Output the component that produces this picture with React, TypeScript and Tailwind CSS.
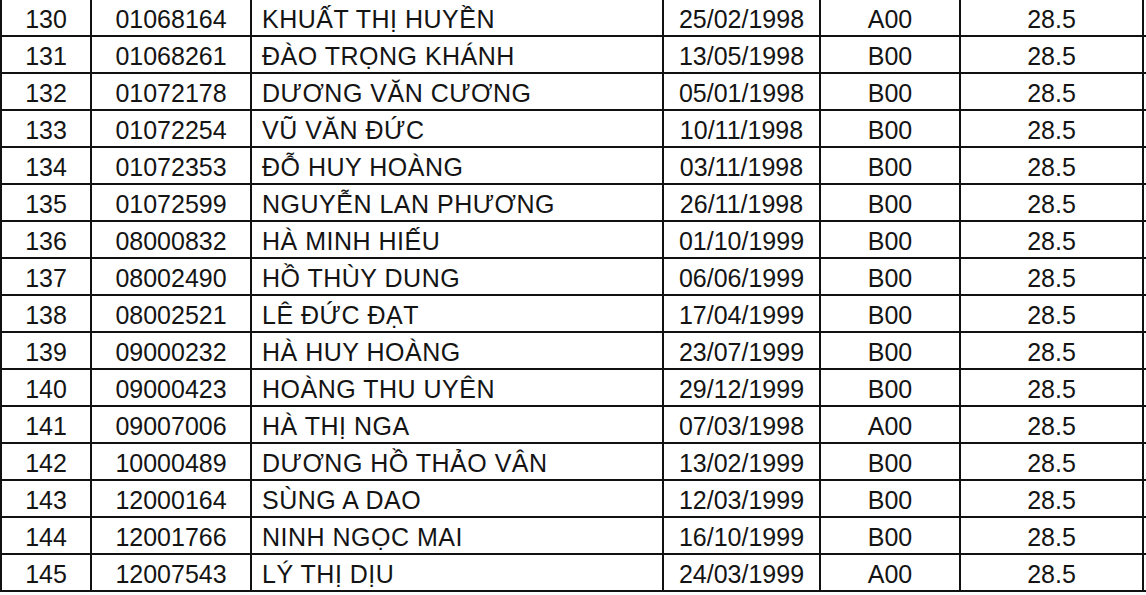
const rows: [string, string, string, string, string, string][] = [
  ['130', '01068164', 'KHUẤT THỊ HUYỀN', '25/02/1998', 'A00', '28.5'],
  ['131', '01068261', 'ĐÀO TRỌNG KHÁNH', '13/05/1998', 'B00', '28.5'],
  ['132', '01072178', 'DƯƠNG VĂN CƯƠNG', '05/01/1998', 'B00', '28.5'],
  ['133', '01072254', 'VŨ VĂN ĐỨC', '10/11/1998', 'B00', '28.5'],
  ['134', '01072353', 'ĐỖ HUY HOÀNG', '03/11/1998', 'B00', '28.5'],
  ['135', '01072599', 'NGUYỄN LAN PHƯƠNG', '26/11/1998', 'B00', '28.5'],
  ['136', '08000832', 'HÀ MINH HIẾU', '01/10/1999', 'B00', '28.5'],
  ['137', '08002490', 'HỒ THÙY DUNG', '06/06/1999', 'B00', '28.5'],
  ['138', '08002521', 'LÊ ĐỨC ĐẠT', '17/04/1999', 'B00', '28.5'],
  ['139', '09000232', 'HÀ HUY HOÀNG', '23/07/1999', 'B00', '28.5'],
  ['140', '09000423', 'HOÀNG THU UYÊN', '29/12/1999', 'B00', '28.5'],
  ['141', '09007006', 'HÀ THỊ NGA', '07/03/1998', 'A00', '28.5'],
  ['142', '10000489', 'DƯƠNG HỒ THẢO VÂN', '13/02/1999', 'B00', '28.5'],
  ['143', '12000164', 'SÙNG A DAO', '12/03/1999', 'B00', '28.5'],
  ['144', '12001766', 'NINH NGỌC MAI', '16/10/1999', 'B00', '28.5'],
  ['145', '12007543', 'LÝ THỊ DỊU', '24/03/1999', 'A00', '28.5'],
]

const cell = 'flex items-center pt-[3px] border-r-2 border-[#111]'

export default function App() {
  return (
    <div className="w-[1146px] h-[595px] bg-white overflow-hidden text-[25px] leading-none text-[#141414] font-['Liberation_Sans',Arial,sans-serif]">
      {rows.map(([stt, sbd, name, dob, group, score]) => (
        <div
          key={stt}
          className="grid grid-cols-[92px_160px_412px_157px_140px_183px] h-[37px] border-b-2 border-[#111]"
        >
          {/* STT */}
          <div className={`${cell} border-l-2 justify-center`}>{stt}</div>
          {/* SBD */}
          <div className={`${cell} justify-center`}>{sbd}</div>
          {/* Họ tên */}
          <div className={`${cell} pl-[10px] tracking-[0.5px]`}>{name}</div>
          {/* Ngày sinh */}
          <div className={`${cell} justify-center`}>{dob}</div>
          {/* Khối */}
          <div className={`${cell} justify-center`}>{group}</div>
          {/* Điểm */}
          <div className={`${cell} justify-center`}>{score}</div>
        </div>
      ))}
    </div>
  )
}
